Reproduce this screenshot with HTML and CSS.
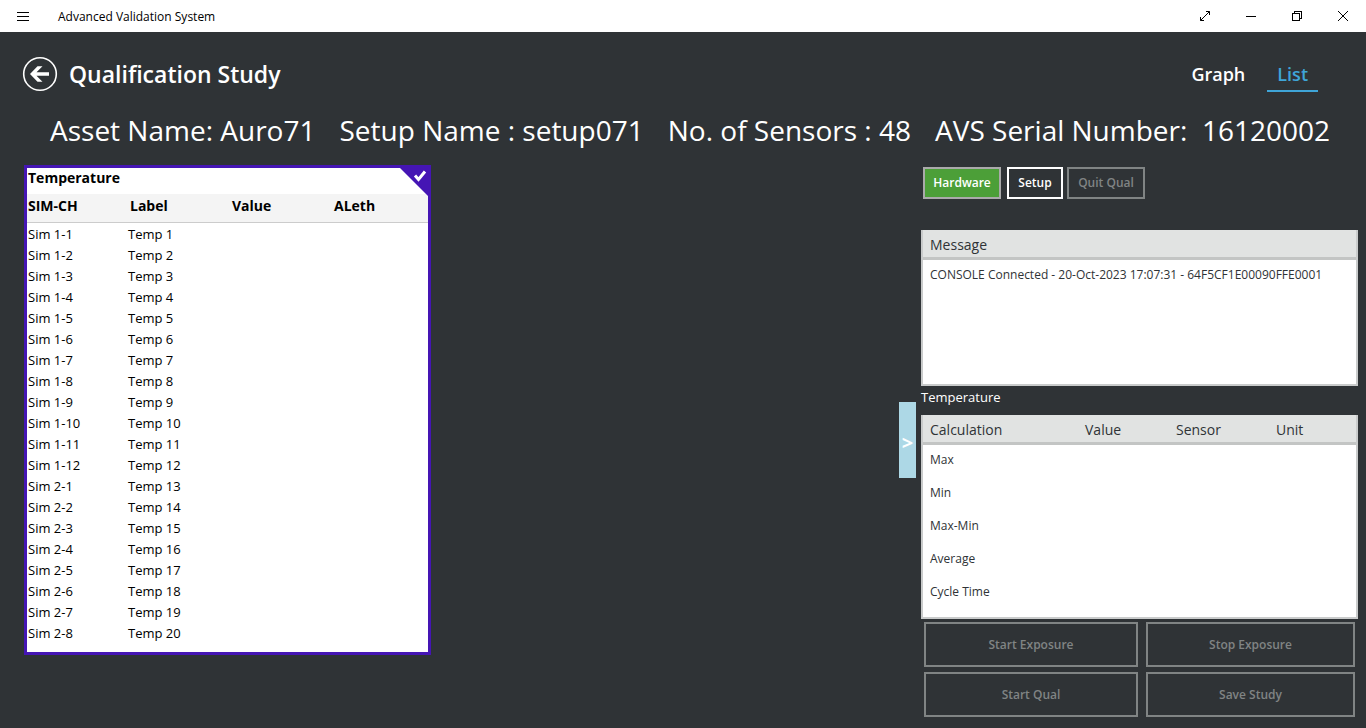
FILE: index.html
```html
<!DOCTYPE html>
<html lang="en">
<head>
<meta charset="utf-8">
<title>Advanced Validation System</title>
<link rel="stylesheet" href="styles.css">
</head>
<body>
<div class="app">
  <header class="titlebar">
    <button class="win-btn menu-btn" aria-label="Menu"><svg width="12" height="11" viewBox="0 0 12 11" shape-rendering="crispEdges"><path d="M0 1.5h12M0 5.5h12M0 9.5h12"/></svg></button>
    <span class="app-name">Advanced Validation System</span>
    <div class="win-controls">
      <button class="win-btn" aria-label="Full screen"><svg width="12" height="12" viewBox="0 0 12 12"><path d="M1.5 10.5l9-9M7 1.5h3.5V5M1.5 7v3.5H5"/></svg></button>
      <button class="win-btn" aria-label="Minimize"><svg width="12" height="12" viewBox="0 0 12 12" shape-rendering="crispEdges"><path d="M1 6.5h10"/></svg></button>
      <button class="win-btn" aria-label="Restore"><svg width="12" height="12" viewBox="0 0 12 12" shape-rendering="crispEdges"><path d="M1.5 3.5h7v7h-7zM3.500 3.500v-2h7v7h-2"/></svg></button>
      <button class="win-btn" aria-label="Close"><svg width="12" height="12" viewBox="0 0 12 12"><path d="M1 1l10 10M11 1L1 11"/></svg></button>
    </div>
  </header>

  <div class="page-head">
    <button class="back" aria-label="Back"><svg width="36" height="36" viewBox="0 0 36 36"><circle cx="18" cy="18" r="16.300" fill="none" stroke="#fff" stroke-width="1.600"/><path d="M8 18l7.500-7.700h5L14.500 16.200H27v3.600H14.500l6 5.900h-5z" fill="#fff"/></svg></button>
    <h1>Qualification Study</h1>
    <nav class="tabs">
      <a href="#graph">Graph</a>
      <a href="#list" class="active" aria-current="page">List</a>
    </nav>
  </div>

  <div class="info">
    <span>Asset Name: Auro71</span>
    <span>Setup Name : setup071</span>
    <span>No. of Sensors : 48</span>
    <span>AVS Serial Number:  16120002</span>
  </div>

  <main class="content">
    <section class="card">
      <h2>Temperature</h2>
      <svg class="corner" width="28" height="28" viewBox="0 0 28 28"><path d="M0 0h28v28z" fill="#4515b4"/><path d="M15 7.500l3.500 4L25 3.500" fill="none" stroke="#fff" stroke-width="3"/></svg>
      <table class="sensors">
        <colgroup><col class="c-sim"><col class="c-std"><col class="c-std"><col></colgroup>
        <thead><tr><th>SIM-CH</th><th>Label</th><th>Value</th><th>ALeth</th></tr></thead>
        <tbody>
          <tr><td>Sim 1-1</td><td>Temp 1</td><td></td><td></td></tr>
          <tr><td>Sim 1-2</td><td>Temp 2</td><td></td><td></td></tr>
          <tr><td>Sim 1-3</td><td>Temp 3</td><td></td><td></td></tr>
          <tr><td>Sim 1-4</td><td>Temp 4</td><td></td><td></td></tr>
          <tr><td>Sim 1-5</td><td>Temp 5</td><td></td><td></td></tr>
          <tr><td>Sim 1-6</td><td>Temp 6</td><td></td><td></td></tr>
          <tr><td>Sim 1-7</td><td>Temp 7</td><td></td><td></td></tr>
          <tr><td>Sim 1-8</td><td>Temp 8</td><td></td><td></td></tr>
          <tr><td>Sim 1-9</td><td>Temp 9</td><td></td><td></td></tr>
          <tr><td>Sim 1-10</td><td>Temp 10</td><td></td><td></td></tr>
          <tr><td>Sim 1-11</td><td>Temp 11</td><td></td><td></td></tr>
          <tr><td>Sim 1-12</td><td>Temp 12</td><td></td><td></td></tr>
          <tr><td>Sim 2-1</td><td>Temp 13</td><td></td><td></td></tr>
          <tr><td>Sim 2-2</td><td>Temp 14</td><td></td><td></td></tr>
          <tr><td>Sim 2-3</td><td>Temp 15</td><td></td><td></td></tr>
          <tr><td>Sim 2-4</td><td>Temp 16</td><td></td><td></td></tr>
          <tr><td>Sim 2-5</td><td>Temp 17</td><td></td><td></td></tr>
          <tr><td>Sim 2-6</td><td>Temp 18</td><td></td><td></td></tr>
          <tr><td>Sim 2-7</td><td>Temp 19</td><td></td><td></td></tr>
          <tr><td>Sim 2-8</td><td>Temp 20</td><td></td><td></td></tr>
        </tbody>
      </table>
    </section>

    <button class="handle" aria-label="Collapse panel">&gt;</button>

    <aside class="side">
      <div class="toolbar">
        <button class="btn hardware">Hardware</button>
        <button class="btn setup">Setup</button>
        <button class="btn quit" disabled>Quit Qual</button>
      </div>
      <section class="panel messages">
        <h3>Message</h3>
        <p>CONSOLE Connected - 20-Oct-2023 17:07:31 - 64F5CF1E00090FFE0001</p>
      </section>
      <h3 class="caption">Temperature</h3>
      <div class="panel calc">
        <table>
          <colgroup><col class="k-calc"><col class="k-value"><col class="k-sensor"><col></colgroup>
          <thead><tr><th>Calculation</th><th>Value</th><th>Sensor</th><th>Unit</th></tr></thead>
          <tbody>
            <tr><td>Max</td><td></td><td></td><td></td></tr>
            <tr><td>Min</td><td></td><td></td><td></td></tr>
            <tr><td>Max-Min</td><td></td><td></td><td></td></tr>
            <tr><td>Average</td><td></td><td></td><td></td></tr>
            <tr><td>Cycle Time</td><td></td><td></td><td></td></tr>
          </tbody>
        </table>
      </div>
      <div class="actions">
        <button class="btn" disabled>Start Exposure</button>
        <button class="btn" disabled>Stop Exposure</button>
        <button class="btn" disabled>Start Qual</button>
        <button class="btn" disabled>Save Study</button>
      </div>
    </aside>
  </main>
</div>
</body>
</html>
```

FILE: styles.css
```css
* { box-sizing: border-box; }
body {
  margin: 0;
  background: #2f3336;
  color: #fff;
  font-family: "Open Sans", "Noto Sans", sans-serif;
  font-size: 12px;
}
h1, h2, h3, p { margin: 0; }
button { font: inherit; color: inherit; background: none; border: 0; padding: 0; }
svg { display: block; }
table { width: 100%; border-collapse: separate; border-spacing: 0; table-layout: fixed; }
th { text-align: left; }

.titlebar { display: flex; align-items: center; height: 32px; background: #fff; color: #000; }
.win-btn { display: grid; place-items: center; width: 46px; height: 32px; }
.win-btn path { fill: none; stroke: #000; stroke-width: 1; }
.app-name { padding-left: 12px; }
.win-controls { display: flex; margin-left: auto; }

.page-head { display: flex; align-items: center; height: 76px; padding: 8px 48px 0 22px; }
.back { margin-right: 11px; }
h1 { font-size: 23px; line-height: 32px; font-weight: 700; font-weight: 600; }
.tabs { display: flex; gap: 12px; margin-left: auto; }
.tabs a {
  padding: 4px 10px 2px;
  border-bottom: 2px solid transparent;
  color: #fff;
  font-size: 18px;
  line-height: 28px;
  font-weight: 600;
  text-decoration: none;
}
.tabs .active { color: #3fa5d8; border-color: #3fa5d8; }

.info {
  display: flex;
  justify-content: space-between;
  padding: 2px 36px 0 50px;
  font-size: 28px;
  line-height: 40px;
  white-space: pre;
}

.content { display: flex; align-items: flex-start; padding: 15px 8px 11px 24px; }
.card {
  position: relative;
  width: 407px;
  padding-bottom: 8px;
  border: 3px solid #4515b4;
  background: #fff;
  color: #000;
}
.card h2 { padding: 0 1px 6px; font-size: 14px; line-height: 20px; font-weight: 700; }
.corner { position: absolute; top: 0; right: 0; }
.c-sim { width: 100px; }
.c-std { width: 102px; }
.sensors th {
  height: 29px;
  padding: 0 0 4px 3px;
  background: #f4f4f4;
  border-bottom: 1px solid #ccc;
  font-size: 14px;
  line-height: 20px;
}
.sensors th:first-child { padding-left: 1px; }
.sensors td { height: 21px; padding: 0 1px; font-size: 13px; line-height: 21px; }
.sensors tbody tr:first-child td { height: 22px; padding-top: 1px; }

.handle {
  width: 17px;
  height: 76px;
  margin: 237px 5px 0 auto;
  padding: 4px 0 0;
  background: #add8e6;
  font-size: 20px;
  font-weight: 700;
}
.side { width: 437px; }
.toolbar { display: flex; gap: 4px; padding: 2px 2px 31px; }
.btn { height: 32px; border: 2px solid #fff; font-size: 12px; font-weight: 600; line-height: 16px; }
.btn:disabled { border-color: #808484; color: #808484; }
.hardware, .quit { width: 78px; }
.hardware { margin-right: 2px; border-color: #aaa; background: #4c9f38; }
.setup { width: 56px; }
.panel { border: 2px solid #c9cbcb; border-top: 0; background: #fff; color: #2f3336; }
.messages { height: 156px; }
.messages h3, .calc th {
  height: 30px;
  padding: 2px 7px 0;
  background: #e1e3e2;
  border-bottom: 3px solid #c3c5c4;
  font-size: 14px;
  line-height: 25px;
  font-weight: 400;
}
.messages p { padding: 6px 7px; line-height: 18px; }
.caption { padding: 2px 0 9px; font-size: 13px; line-height: 18px; font-weight: 400; }
.calc { height: 204px; }
.k-calc { width: 155px; }
.k-value { width: 91px; }
.k-sensor { width: 100px; }
.calc td { height: 33px; padding: 0 7px 3px; line-height: 18px; }
.actions {
  display: grid;
  grid-template-columns: 214fr 209fr;
  gap: 5px 8px;
  padding: 3px 3px 0;
}
.actions .btn { height: 45px; }
```
